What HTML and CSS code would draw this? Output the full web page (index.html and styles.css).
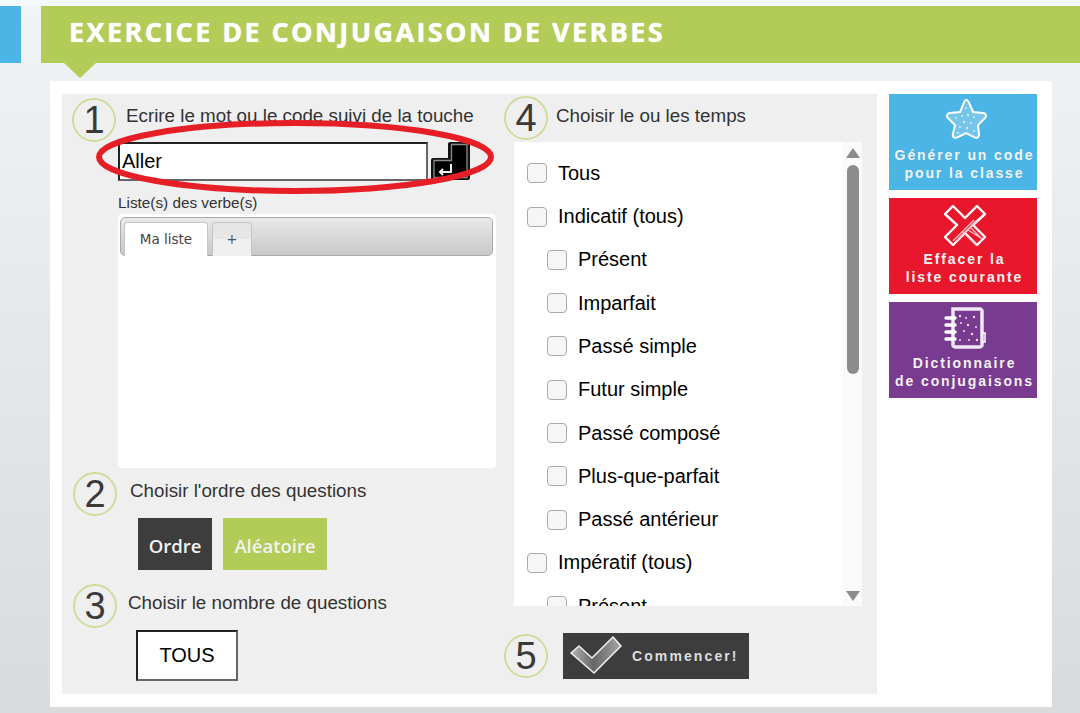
FILE: index.html
```html
<!DOCTYPE html>
<html lang="fr">
<head>
    <meta charset="UTF-8">
    <title>Exercice de conjugaison de verbes</title>
    <link rel="stylesheet" href="styles.css">
</head>
<body>
    <div class="top-strip"></div>
    <div class="header">
        <div class="side-tab"></div>
        <h1 class="banner">EXERCICE DE CONJUGAISON DE VERBES</h1>
    </div>
    <div class="sheet">
        <div class="panel">
            <div class="col-left">
                <div class="step step-1">
                    <div class="num">1</div>
                    <h3>Ecrire le mot ou le code suivi de la touche</h3>
                </div>
                <div class="word-row">
                    <input class="word-input" type="text" value="Aller">
                    <svg class="enter-key" width="41" height="39" viewBox="0 0 41 39">
                        <path d="M20 0h18a2 2 0 0 1 2 2v34a2 2 0 0 1-2 2H3a2 2 0 0 1-2-2V18a2 2 0 0 1 2-2h15V2a2 2 0 0 1 2-2z" fill="#111"/>
                        <path d="M21.500 2.500h15.500v33H4v-17h17.500z" fill="#000" stroke="#8a8a8a" stroke-width="1.300"/>
                        <path d="M21 22v8H10M13 27l-3 3 3 3" fill="none" stroke="#eee" stroke-width="2"/>
                    </svg>
                </div>
                <div class="list-label">Liste(s) des verbe(s)</div>
                <div class="tabs">
                    <div class="tab-bar">
                        <div class="tab tab-active">Ma liste</div>
                        <div class="tab tab-add">+</div>
                    </div>
                </div>
                <div class="step step-2">
                    <div class="num">2</div>
                    <h3>Choisir l'ordre des questions</h3>
                </div>
                <div class="order-btns">
                    <div class="btn btn-dark">Ordre</div>
                    <div class="btn btn-green">Aléatoire</div>
                </div>
                <div class="step step-3">
                    <div class="num">3</div>
                    <h3>Choisir le nombre de questions</h3>
                </div>
                <div class="count-box">TOUS</div>
            </div>
            <div class="col-right">
                <div class="step step-4">
                    <div class="num">4</div>
                    <h3>Choisir le ou les temps</h3>
                </div>
                <div class="tense-list">
                    <label class="tense"><input type="checkbox"><span>Tous</span></label>
                    <label class="tense"><input type="checkbox"><span>Indicatif (tous)</span></label>
                    <label class="tense sub"><input type="checkbox"><span>Présent</span></label>
                    <label class="tense sub"><input type="checkbox"><span>Imparfait</span></label>
                    <label class="tense sub"><input type="checkbox"><span>Passé simple</span></label>
                    <label class="tense sub"><input type="checkbox"><span>Futur simple</span></label>
                    <label class="tense sub"><input type="checkbox"><span>Passé composé</span></label>
                    <label class="tense sub"><input type="checkbox"><span>Plus-que-parfait</span></label>
                    <label class="tense sub"><input type="checkbox"><span>Passé antérieur</span></label>
                    <label class="tense"><input type="checkbox"><span>Impératif (tous)</span></label>
                    <label class="tense sub"><input type="checkbox"><span>Présent</span></label>
                    <div class="scroll-track">
                        <div class="arrow-up"></div>
                        <div class="scroll-thumb"></div>
                        <div class="arrow-down"></div>
                    </div>
                </div>
                <div class="start-row">
                    <div class="num">5</div>
                    <div class="start-btn">
                        <svg width="54" height="40" viewBox="0 0 54 40">
                            <defs>
                                <linearGradient id="checkFill" x1="0" y1="0" x2="1" y2="0">
                                    <stop offset="0" stop-color="#b5b5b5"/>
                                    <stop offset="0.45" stop-color="#666"/>
                                    <stop offset="1" stop-color="#a5a5a5"/>
                                </linearGradient>
                            </defs>
                            <path d="M1 17l8-7 13 12L43 1l8 9-27 27z" fill="url(#checkFill)" stroke="#eee" stroke-width="1.600" stroke-linejoin="round"/>
                        </svg>
                        <span>Commencer!</span>
                    </div>
                </div>
            </div>
        </div>
        <div class="side-col">
            <div class="side-btn side-blue">
                <svg class="side-icon" width="44" height="44" viewBox="0 0 44 44">
                    <path d="M22 2c2 0 3 2 4 5l3 7 10 1c3 .5 4 3 2 5l-7 7 1 9c.5 3-2 5-5 3l-8-4-8 4c-3 2-6 0-5-3l2-9-7-7c-2-2-1-4.500 2-5l10-1 3-7c1-3 2-5 3-5z" fill="#75c4ea" stroke="#fff" stroke-width="2"/>
                    <g fill="#d6eefa">
                        <circle cx="22" cy="10" r="1"/><circle cx="18" cy="18" r="1"/><circle cx="24" cy="17" r="1.200"/><circle cx="30" cy="19" r="1"/>
                        <circle cx="12" cy="20" r="1"/><circle cx="20" cy="24" r="1.200"/><circle cx="27" cy="25" r="1"/><circle cx="16" cy="29" r="1"/>
                        <circle cx="23" cy="30" r="1.200"/><circle cx="30" cy="33" r="1"/><circle cx="14" cy="35" r="1"/>
                    </g>
                </svg>
                <div class="side-label">Générer un code<br>pour la classe</div>
            </div>
            <div class="side-btn side-red">
                <svg class="side-icon" width="42" height="42" viewBox="0 0 42 42">
                    <path d="M9 2l12 12L33 2l8 8-12 11 12 12-8 8-12-12L9 41l-8-8 12-12L1 10z" fill="#e8172c" stroke="#fff" stroke-width="2.400" stroke-linejoin="round"/>
                    <path d="M9 37l21-21M12 38l20-20M15 34l18-18M22 31l12 12M18 27l14 14M24 26l13 8M26 23l12 12" stroke="#f7c9cd" stroke-width="1.200"/>
                </svg>
                <div class="side-label">Effacer la<br>liste courante</div>
            </div>
            <div class="side-btn side-purple">
                <svg class="side-icon" width="42" height="42" viewBox="0 0 42 42">
                    <path d="M9 2h27c1 0 2 1 2 2v34c0 1-1 2-2 2H11c-1 0-2-1-2-2z" fill="#793b90" stroke="#f0e8f4" stroke-width="3.500"/>
                    <path d="M2 11h9M2 18h9M2 25h9M2 32h9" stroke="#fff" stroke-width="3.500" stroke-linecap="round"/>
                    <path d="M38 26h3v9h-3" fill="none" stroke="#fff" stroke-width="1.500"/>
                    <g fill="#eadff0">
                        <circle cx="16" cy="9" r="1.200"/><circle cx="22" cy="11" r="1"/><circle cx="30" cy="10" r="1.200"/><circle cx="17" cy="16" r="1"/>
                        <circle cx="24" cy="18" r="1.200"/><circle cx="32" cy="20" r="1"/><circle cx="28" cy="27" r="1.200"/><circle cx="20" cy="24" r="1"/>
                        <circle cx="33" cy="33" r="1.200"/><circle cx="25" cy="33" r="1"/><circle cx="16" cy="33" r="1"/>
                    </g>
                </svg>
                <div class="side-label">Dictionnaire<br>de conjugaisons</div>
            </div>
        </div>
        <svg class="oval" width="404" height="80" viewBox="0 0 404 80">
            <ellipse cx="202" cy="40" rx="196" ry="34" fill="none" stroke="#e61e25" stroke-width="6"/>
        </svg>
    </div>
</body>
</html>
```
FILE: styles.css
```css
html, body {
    height: 100%;
}
body {
    margin: 0;
    overflow: hidden;
    font-family: "Liberation Sans", Arial, sans-serif;
    background: linear-gradient(#f1f4f5, #d8dadc);
}
h1, h3 {
    margin: 0;
    font-weight: normal;
}
.top-strip {
    height: 6px;
    background-color: #f3f9fc;
}
.header {
    display: flex;
    height: 57px;
}
.side-tab {
    width: 21px;
    background-color: #4bb5e6;
}
.banner {
    position: relative;
    flex: 1;
    margin-left: 20px;
    padding-left: 28px;
    background-color: #b3cc57;
    color: #fff;
    font-family: "Open Sans", sans-serif;
    font-size: 27px;
    font-weight: bold;
    letter-spacing: 2.4px;
    line-height: 51px;
    text-shadow: 0 0 1px #fff;
}
.banner::after {
    content: "";
    position: absolute;
    left: 23px;
    top: 57px;
    border-left: 16px solid transparent;
    border-right: 16px solid transparent;
    border-top: 15px solid #b3cc57;
}
.sheet {
    position: relative;
    display: flex;
    width: 978px;
    height: 600px;
    margin: 18px 0 0 50px;
    padding: 13px 12px;
    background-color: #fff;
}
.panel {
    display: flex;
    width: 815px;
    background-color: #efefef;
}
.side-col {
    display: flex;
    flex-direction: column;
    gap: 8px;
    margin-left: 12px;
}
.side-btn {
    display: grid;
    grid-template-rows: 52px auto;
    width: 148px;
    height: 96px;
    text-align: center;
    color: #f2f2f2;
    font-size: 14px;
    font-weight: bold;
    letter-spacing: 1.9px;
    line-height: 18px;
}
.side-label {
    padding-left: 3px;
}
.side-icon {
    align-self: center;
    margin-left: 55px;
}
.side-blue { background-color: #4bb5e6; }
.side-red { background-color: #e8172c; }
.side-purple { background-color: #793b90; }
.side-red .side-icon { margin-top: 2px; }

.col-left {
    width: 442px;
}
.col-right {
    flex: 1;
}
.step {
    display: flex;
    height: 44px;
    color: #333;
}
.step h3 {
    font-size: 18.8px;
    line-height: 20px;
    margin-top: 8px;
}
.num {
    flex: none;
    box-sizing: border-box;
    width: 44px;
    height: 44px;
    border: 2px solid #cfdc9a;
    border-radius: 50%;
    color: #3a3a3a;
    font-size: 38px;
    line-height: 41px;
    text-align: center;
}
.step-1 { margin: 4px 0 0 10px; gap: 10px; }
.step-2 { margin: 4px 0 0 11px; gap: 13px; }
.step-3 { margin: 14px 0 0 11px; gap: 11px; }
.step-4 { margin: 2px 0 0 0; gap: 8px; }
.step-2 h3 { margin-top: 9px; }
.step-3 h3 { margin-top: 9px; }
.step-4 h3 { margin-top: 10px; }

.word-row {
    display: flex;
    gap: 2px;
    margin-left: 56px;
}
.word-input {
    box-sizing: border-box;
    width: 310px;
    height: 39px;
    padding: 0 2px;
    border: 2px solid;
    border-color: #222 #666 #666 #222;
    background-color: #fff;
    font-family: "Liberation Sans", Arial, sans-serif;
    font-size: 20px;
    color: #000;
}
.list-label {
    margin: 13px 0 0 56px;
    color: #333;
    font-size: 15.3px;
    line-height: 18px;
}
.tabs {
    box-sizing: border-box;
    width: 378px;
    height: 254px;
    margin: 2px 0 0 56px;
    padding: 3px 3px 0 2px;
    background-color: #fff;
    border-radius: 4px;
}
.tab-bar {
    display: flex;
    gap: 4px;
    box-sizing: border-box;
    height: 39px;
    padding: 4px 0 0 3px;
    border: 1px solid #aaa;
    border-radius: 5px;
    background: linear-gradient(#e9e9e9, #c8c8c8);
}
.tab {
    box-sizing: border-box;
    height: 34px;
    border: 1px solid #c5c5c5;
    border-bottom: none;
    border-radius: 4px 4px 0 0;
    color: #444;
    font-family: "DejaVu Sans", sans-serif;
    font-size: 13.5px;
    line-height: 32px;
    text-align: center;
}
.tab-active {
    width: 84px;
    background-color: #fff;
}
.tab-add {
    width: 40px;
    color: #555;
    background: linear-gradient(#e6e6e6 50%, #f0f0f0 50%);
}
.order-btns {
    display: flex;
    gap: 11px;
    margin: 2px 0 0 76px;
}
.btn {
    height: 52px;
    color: #f2f2f2;
    font-family: "Open Sans", sans-serif;
    font-size: 18.5px;
    font-weight: 600;
    line-height: 56px;
    text-align: center;
}
.btn-dark {
    width: 74px;
    background-color: #3d3d3d;
}
.btn-green {
    width: 104px;
    background-color: #b3cc57;
}
.count-box {
    box-sizing: border-box;
    width: 102px;
    height: 51px;
    margin: 2px 0 0 74px;
    border: 2px solid;
    border-color: #222 #666 #666 #222;
    background-color: #fff;
    font-size: 20px;
    line-height: 47px;
    text-align: center;
    color: #000;
}
.tense-list {
    position: relative;
    box-sizing: border-box;
    width: 348px;
    height: 464px;
    margin: 2px 0 0 10px;
    padding: 9.6px 0 0 13px;
    overflow: hidden;
    background-color: #fff;
}
.tense {
    display: flex;
    align-items: center;
    gap: 11px;
    height: 43.3px;
    color: #000;
    font-size: 20px;
}
.tense.sub {
    margin-left: 20px;
}
.tense input {
    appearance: none;
    flex: none;
    width: 20px;
    height: 20px;
    margin: 0;
    border: 1px solid #aaa;
    border-radius: 4px;
    background-color: #f6f6f6;
}
.scroll-track {
    position: absolute;
    top: 0;
    right: 0;
    bottom: 0;
    width: 19px;
    background-color: #fafafa;
}
.scroll-thumb {
    position: absolute;
    left: 4px;
    top: 23px;
    width: 12px;
    height: 209px;
    border-radius: 6px;
    background-color: #8c8c8c;
}
.arrow-up, .arrow-down {
    position: absolute;
    left: 3px;
    border-left: 7px solid transparent;
    border-right: 7px solid transparent;
}
.arrow-up {
    top: 6px;
    border-bottom: 10px solid #8c8c8c;
}
.arrow-down {
    bottom: 5px;
    border-top: 10px solid #8c8c8c;
}
.start-row {
    display: flex;
    align-items: center;
    gap: 15px;
    margin-top: 27px;
}
.start-btn {
    display: flex;
    align-items: center;
    box-sizing: border-box;
    width: 186px;
    height: 46px;
    padding-left: 7px;
    gap: 8px;
    background-color: #3d3d3d;
    color: #ddd;
    font-size: 14px;
    font-weight: bold;
    letter-spacing: 2.1px;
}
.oval {
    position: absolute;
    left: 43px;
    top: 36px;
}
```
